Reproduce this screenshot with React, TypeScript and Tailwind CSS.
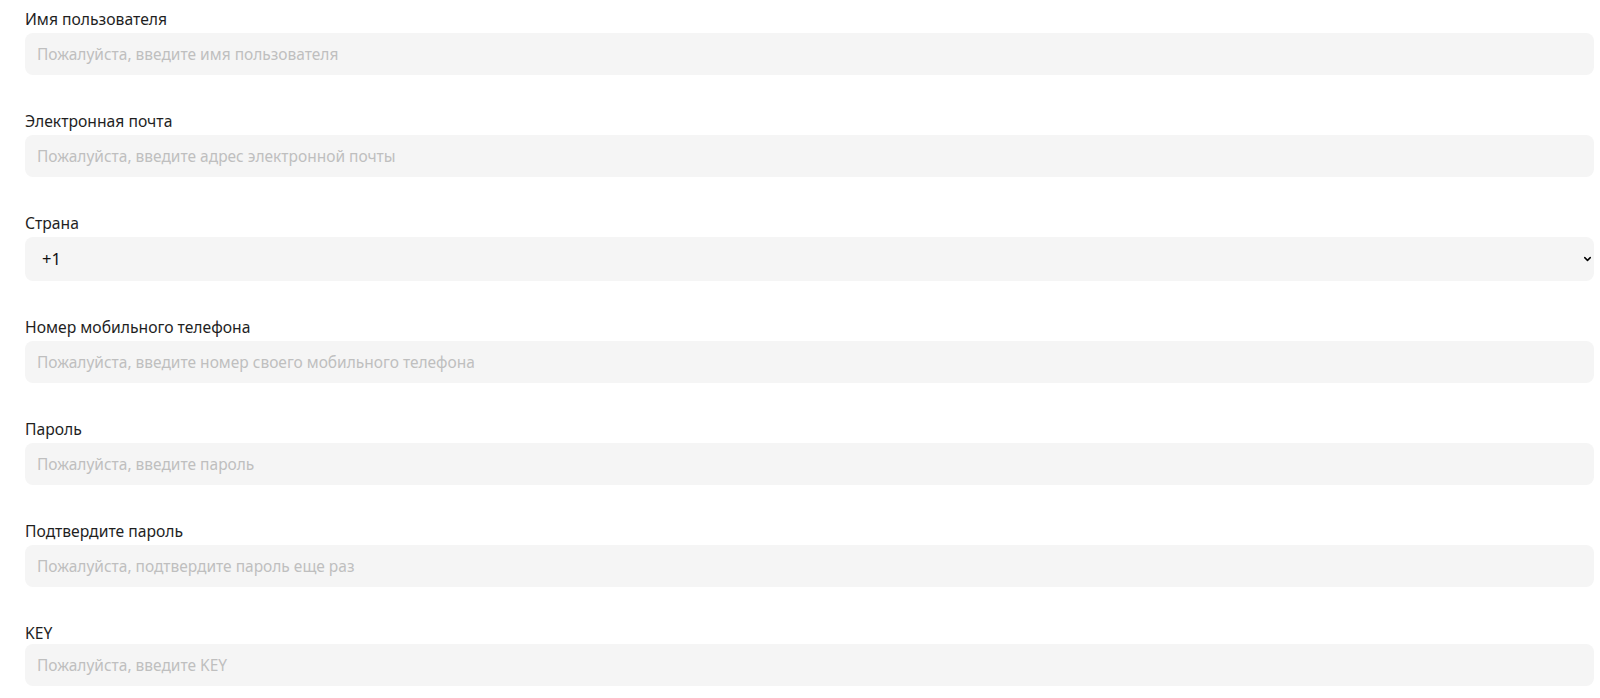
import { ChevronDown } from "lucide-react";

type Field = {
  label: string;
  placeholder: string;
  type?: string;
  tight?: boolean;
};

const fieldsTop: Field[] = [
  { label: "Имя пользователя", placeholder: "Пожалуйста, введите имя пользователя" },
  { label: "Электронная почта", placeholder: "Пожалуйста, введите адрес электронной почты", type: "email" },
];

const fieldsBottom: Field[] = [
  { label: "Номер мобильного телефона", placeholder: "Пожалуйста, введите номер своего мобильного телефона", type: "tel" },
  { label: "Пароль", placeholder: "Пожалуйста, введите пароль", type: "password" },
  { label: "Подтвердите пароль", placeholder: "Пожалуйста, подтвердите пароль еще раз", type: "password" },
  { label: "KEY", placeholder: "Пожалуйста, введите KEY", tight: true },
];

function TextField({ label, placeholder, type = "text", tight }: Field) {
  return (
    <div className="flex flex-col">
      <label className={`text-[15.7px] leading-[20px] text-[#1f1f1f] ${tight ? "mb-[1px]" : "mb-[4px]"}`}>
        {label}
      </label>
      <input
        type={type}
        placeholder={placeholder}
        className="h-[42px] w-full rounded-[8px] bg-[#f5f5f5] px-[12px] text-[15.5px] text-[#1f1f1f] outline-none placeholder:text-[#bfbfbf]"
      />
    </div>
  );
}

export default function App() {
  return (
    <div
      className="min-h-screen bg-white pt-[9px] pl-[25px] pr-[6px]"
      style={{ fontFamily: '"Noto Sans", "Open Sans", sans-serif' }}
    >
      <form className="flex flex-col gap-[36px]">
        {fieldsTop.map((f) => (
          <TextField key={f.label} {...f} />
        ))}

        <div className="flex flex-col">
          <label className="mb-[4px] text-[15.7px] leading-[20px] text-[#1f1f1f]">Страна</label>
          <div className="relative">
            <select
              defaultValue="+1"
              className="h-[44px] w-full appearance-none rounded-[8px] bg-[#f5f5f5] pl-[17px] text-[16.5px] text-[#111] outline-none"
            >
              <option value="+1">+1</option>
              <option value="+7">+7</option>
              <option value="+44">+44</option>
              <option value="+86">+86</option>
            </select>
            <ChevronDown
              className="pointer-events-none absolute right-[1px] top-1/2 h-[11px] w-[11px] -translate-y-1/2 text-black"
              strokeWidth={3.2}
            />
          </div>
        </div>

        {fieldsBottom.map((f) => (
          <TextField key={f.label} {...f} />
        ))}
      </form>
    </div>
  );
}
